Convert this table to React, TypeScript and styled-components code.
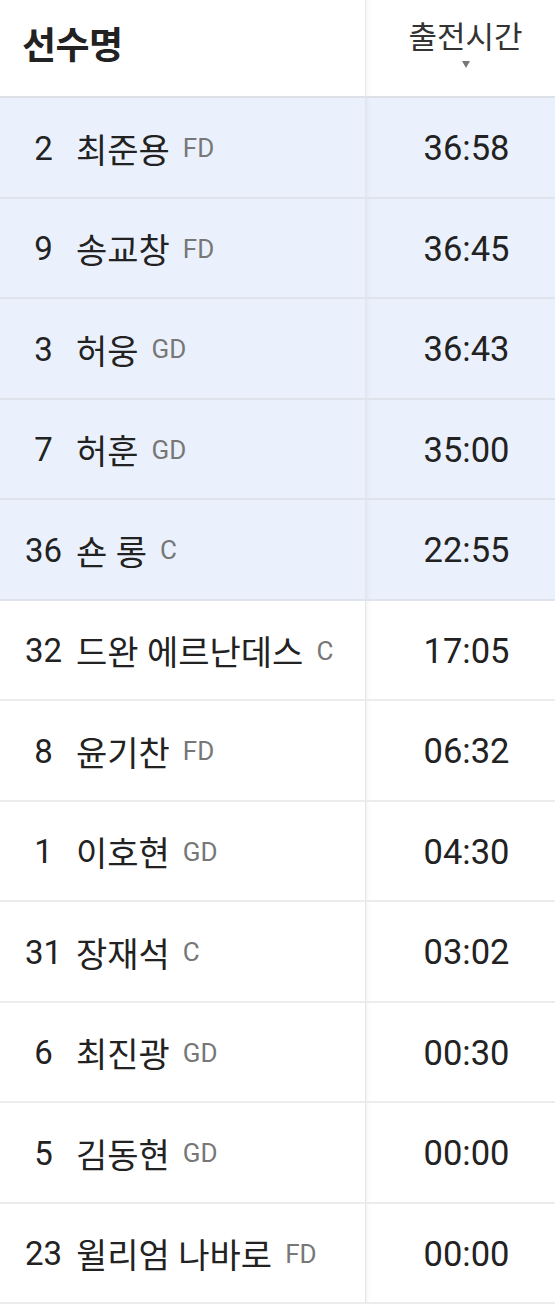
import React from 'react';
import styled, {createGlobalStyle} from 'styled-components';

const Global = createGlobalStyle`
  html, body { margin: 0; padding: 0; background: #fff; }
  body { font-family: Roboto, "Noto Sans CJK KR", sans-serif; color: #222; }
`

const Table = styled.div`
  width: 555px;
  display: grid;
  grid-template-columns: 365px 1fr;
`

const HeadCell = styled.div<{right?: boolean}>`
  height: 98px;
  box-sizing: border-box;
  border-bottom: 2px solid #dde1e7;
  display: flex;
  flex-direction: column;
  justify-content: center;
  align-items: ${p => p.right ? 'center' : 'flex-start'};
  padding: ${p => p.right ? '0 0 10px 10px' : '0 0 10px 22px'};
  ${p => p.right ? 'border-left: 1px solid #e4e6ea; box-shadow: inset 6px 0 6px -6px rgba(0,0,0,0.08);' : ''}
`

const NameHead = styled.span`
  font-size: 37px;
  font-weight: 700;
  color: #222;
  letter-spacing: -0.5px;
`

const TimeHead = styled.span`
  font-size: 31px;
  line-height: 38px;
  color: #333;
`

const Arrow = styled.span`
  width: 0;
  height: 0;
  margin-top: 4px;
  border-left: 4px solid transparent;
  border-right: 4px solid transparent;
  border-top: 7px solid #777;
`

const Cell = styled.div<{hl: boolean; right?: boolean}>`
  height: 100.5px;
  box-sizing: border-box;
  background: ${p => p.hl ? '#ebf1fc' : '#fff'};
  border-bottom: 2px solid ${p => p.hl ? '#dfe4ec' : '#ececec'};
  display: flex;
  align-items: center;
  padding-top: 2px;
  ${p => p.right ? `
    justify-content: center;
    padding-left: 12px;
    border-left: 1px solid #e2e5ea;
    box-shadow: inset 6px 0 6px -6px rgba(0,0,0,0.08);
  ` : 'padding-left: 25px;'}
`

const Num = styled.span`
  width: 37px;
  text-align: center;
  font-size: 33px;
  color: #222;
`

const Name = styled.span`
  margin-left: 14px;
  font-size: 34px;
  color: #222;
`

const Pos = styled.span`
  margin-left: 13px;
  font-size: 26px;
  color: #777;
`

const Time = styled.span`
  font-size: 34.5px;
  color: #222;
`

const players = [
  {no: '2', name: '최준용', pos: 'FD', time: '36:58', hl: true},
  {no: '9', name: '송교창', pos: 'FD', time: '36:45', hl: true},
  {no: '3', name: '허웅', pos: 'GD', time: '36:43', hl: true},
  {no: '7', name: '허훈', pos: 'GD', time: '35:00', hl: true},
  {no: '36', name: '숀 롱', pos: 'C', time: '22:55', hl: true},
  {no: '32', name: '드완 에르난데스', pos: 'C', time: '17:05', hl: false},
  {no: '8', name: '윤기찬', pos: 'FD', time: '06:32', hl: false},
  {no: '1', name: '이호현', pos: 'GD', time: '04:30', hl: false},
  {no: '31', name: '장재석', pos: 'C', time: '03:02', hl: false},
  {no: '6', name: '최진광', pos: 'GD', time: '00:30', hl: false},
  {no: '5', name: '김동현', pos: 'GD', time: '00:00', hl: false},
  {no: '23', name: '윌리엄 나바로', pos: 'FD', time: '00:00', hl: false},
];

function App() {
  return (
    <>
      <Global/>
      <Table>
        <HeadCell>
          <NameHead>선수명</NameHead>
        </HeadCell>
        <HeadCell right>
          <TimeHead>출전시간</TimeHead>
          <Arrow/>
        </HeadCell>
        {players.map(p => (
          <React.Fragment key={p.no}>
            <Cell hl={p.hl}>
              <Num>{p.no}</Num>
              <Name>{p.name}</Name>
              <Pos>{p.pos}</Pos>
            </Cell>
            <Cell hl={p.hl} right>
              <Time>{p.time}</Time>
            </Cell>
          </React.Fragment>
        ))}
      </Table>
    </>
  );
}

export default App;
